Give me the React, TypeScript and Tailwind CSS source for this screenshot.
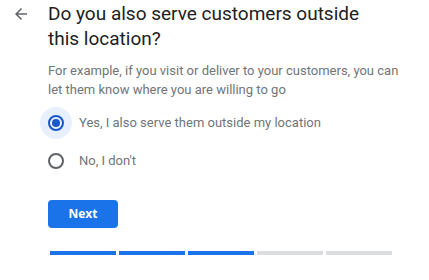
import { useState } from "react";

const steps = [true, true, true, false, false];

function Radio({ checked, label, onSelect }: { checked: boolean; label: string; onSelect: () => void }) {
  return (
    <label className="flex h-[38px] cursor-pointer items-center" onClick={onSelect}>
      <span
        className={`flex h-8 w-8 items-center justify-center rounded-full ${checked ? "bg-[#e8f0fe]" : ""}`}
      >
        <span
          className={`flex h-[16px] w-[16px] items-center justify-center rounded-full border-2 ${
            checked ? "border-[#1a57c8]" : "border-[#5f6368]"
          }`}
        >
          {checked && <span className="h-2 w-2 rounded-full bg-[#1a57c8]" />}
        </span>
      </span>
      <span className="ml-[7px] text-[13px] text-[#70757a]">{label}</span>
    </label>
  );
}

export default function App() {
  const [choice, setChoice] = useState<"yes" | "no">("yes");

  return (
    <div className="h-[280px] w-[429px] bg-white font-['Roboto',sans-serif]">
      <div className="flex pt-[1px]">
        <div className="flex w-[48px] justify-center pt-[4px] pr-[6px]">
          <svg width="18" height="18" viewBox="0 0 24 24" className="text-[#5f6368]">
            <path d="M20 11H7.83l5.59-5.59L12 4l-8 8 8 8 1.41-1.41L7.83 13H20v-2z" fill="currentColor" />
          </svg>
        </div>
        <h1 className="w-[330px] text-[19px] leading-[25px] text-[#202124]">
          Do you also serve customers outside this location?
        </h1>
      </div>

      <p className="ml-[48px] mt-[10px] w-[360px] text-[13px] leading-[19px] text-[#70757a]">
        For example, if you visit or deliver to your customers, you can let them know where you are willing to go
      </p>

      <div className="ml-[40px] mt-[5px] flex flex-col">
        <Radio
          checked={choice === "yes"}
          label="Yes, I also serve them outside my location"
          onSelect={() => setChoice("yes")}
        />
        <Radio checked={choice === "no"} label="No, I don't" onSelect={() => setChoice("no")} />
      </div>

      <button className="ml-[48px] mt-[20px] h-[28px] w-[70px] rounded-[4px] bg-[#1a73e8] font-['Open_Sans',sans-serif] text-[12px] font-bold text-white">
        Next
      </button>

      <div className="ml-[50px] mt-[23px] flex gap-[3px]">
        {steps.map((done, i) => (
          <div key={i} className={`h-[4px] w-[66px] ${done ? "bg-[#1a73e8]" : "bg-[#dadce0]"}`} />
        ))}
      </div>
    </div>
  );
}
